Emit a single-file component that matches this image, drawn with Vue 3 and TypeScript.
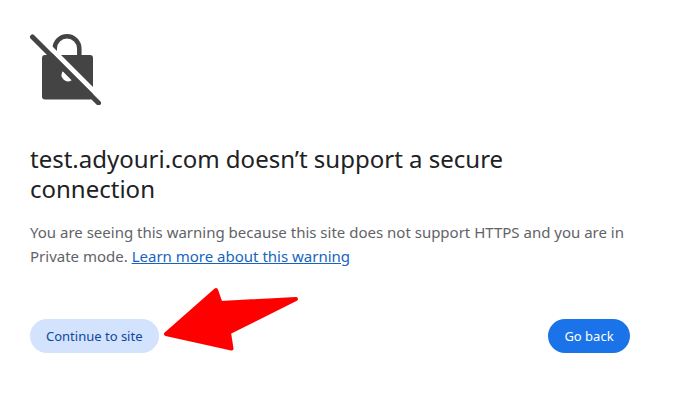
<script setup lang="ts">
const title = "test.adyouri.com doesn’t support a secure connection";
</script>

<template>
  <main class="page">
    <svg class="lock" width="72" height="74" viewBox="0 0 72 74" aria-hidden="true">
      <path class="shackle" d="M24.700 26V17.500a12.300 12.300 0 0 1 24.600 0V26" />
      <rect class="body" x="12" y="24" width="51" height="44.500" rx="3" />
      <path class="hole" d="M32.700 40.300A6.500 6.500 0 0 0 41.700 49.300Z" />
      <path class="gap" d="M8 4.500L66 62.500" />
      <path class="slash" d="M2.500 6L68.500 72" />
    </svg>
    <h1 class="title">{{ title }}</h1>
    <p class="text">
      You are seeing this warning because this site does not support HTTPS and you are in Private mode.
      <a class="link" href="#">Learn more about this warning</a>
    </p>
    <div class="actions">
      <button class="btn secondary" type="button">Continue to site</button>
      <button class="btn primary" type="button">Go back</button>
    </div>
    <svg class="arrow" width="142" height="70" viewBox="0 0 142 70" aria-hidden="true">
      <path d="M6 47L56 3L60.500 16L136 12L69 45.500L71.500 61.500Z" fill="#ff0000" stroke="#ff0000" stroke-width="4" stroke-linejoin="round" />
    </svg>
  </main>
</template>

<style>
html, body { margin: 0; background: #fff; }
</style>

<style scoped>
.page {
  position: relative;
  box-sizing: border-box;
  width: 674px;
  height: 408px;
  padding: 31px 44px 0 30px;
  font-family: "Noto Sans", sans-serif;
  overflow: hidden;
}
.lock { display: block; }
.shackle { fill: none; stroke: #444444; stroke-width: 4.500; }
.body { fill: #444444; }
.hole { fill: #ffffff; }
.gap { stroke: #ffffff; stroke-width: 5; }
.slash { stroke: #444444; stroke-width: 5; stroke-linecap: round; }
.title {
  margin: 39px 0 0;
  font-size: 24px;
  font-weight: 400;
  line-height: 30px;
  color: #202124;
}
.text {
  margin: 16px 0 0;
  font-size: 15px;
  line-height: 24px;
  color: #5f6368;
}
.link { color: #1565c0; text-decoration: underline; }
.actions {
  display: flex;
  justify-content: space-between;
  margin-top: 51px;
}
.btn {
  height: 34px;
  padding: 0 16px;
  border: 0;
  border-radius: 17px;
  font: 400 13px "Noto Sans", sans-serif;
}
.secondary { background: #d3e3fd; color: #0d47a1; }
.primary { background: #1a73e8; color: #fff; min-width: 82px; }
.arrow { position: absolute; left: 160px; top: 287px; }
</style>
